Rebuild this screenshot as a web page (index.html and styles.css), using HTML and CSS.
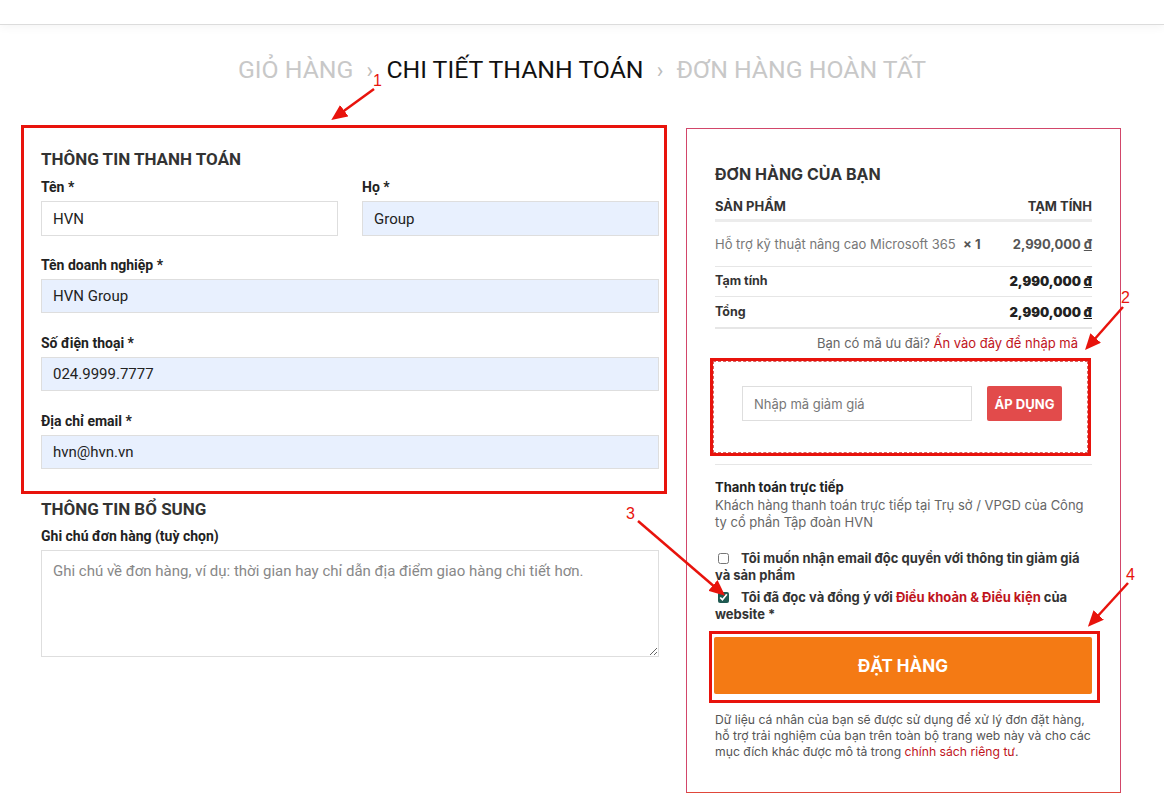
FILE: index.html
```html
<!DOCTYPE html>
<html lang="vi">
<head>
  <meta charset="UTF-8">
  <meta name="viewport" content="width=device-width, initial-scale=1.0">
  <title>Chi tiết thanh toán</title>
  <link rel="stylesheet" href="styles.css">
</head>
<body>
  <div class="topbar"></div>

  <div class="steps">
    <span class="step">GIỎ HÀNG</span>
    <span class="sep">›</span>
    <span class="step current">CHI TIẾT THANH TOÁN</span>
    <span class="sep">›</span>
    <span class="step">ĐƠN HÀNG HOÀN TẤT</span>
  </div>

  <div class="checkout">
    <div class="col-left">
      <div class="mark billing">
        <h3>THÔNG TIN THANH TOÁN</h3>
        <div class="row-2">
          <div class="field">
            <label>Tên *</label>
            <input type="text" class="plain" value="HVN">
          </div>
          <div class="field">
            <label>Họ *</label>
            <input type="text" value="Group">
          </div>
        </div>
        <div class="field">
          <label>Tên doanh nghiệp *</label>
          <input type="text" value="HVN Group">
        </div>
        <div class="field">
          <label>Số điện thoại *</label>
          <input type="text" value="024.9999.7777">
        </div>
        <div class="field last">
          <label>Địa chỉ email *</label>
          <input type="text" value="hvn@hvn.vn">
        </div>
      </div>

      <div class="extra">
        <h3>THÔNG TIN BỔ SUNG</h3>
        <label>Ghi chú đơn hàng (tuỳ chọn)</label>
        <textarea placeholder="Ghi chú về đơn hàng, ví dụ: thời gian hay chỉ dẫn địa điểm giao hàng chi tiết hơn."></textarea>
      </div>
    </div>

    <div class="col-right">
      <h3>ĐƠN HÀNG CỦA BẠN</h3>
      <table class="order">
        <thead>
          <tr><th>SẢN PHẨM</th><th class="num">TẠM TÍNH</th></tr>
        </thead>
        <tbody>
          <tr class="item">
            <td>Hỗ trợ kỹ thuật nâng cao Microsoft 365&nbsp; <b>× 1</b></td>
            <td class="num"><b>2,990,000 <u>đ</u></b></td>
          </tr>
          <tr class="sub">
            <th>Tạm tính</th>
            <td class="num"><b>2,990,000 <u>đ</u></b></td>
          </tr>
          <tr class="total">
            <th>Tổng</th>
            <td class="num"><b>2,990,000 <u>đ</u></b></td>
          </tr>
        </tbody>
      </table>

      <p class="coupon-ask">Bạn có mã ưu đãi? <a href="#">Ấn vào đây để nhập mã</a></p>

      <div class="mark coupon-mark">
        <div class="coupon">
          <input type="text" class="plain" placeholder="Nhập mã giảm giá">
          <button class="apply">ÁP DỤNG</button>
        </div>
      </div>

      <div class="payment">
        <strong>Thanh toán trực tiếp</strong>
        <p>Khách hàng thanh toán trực tiếp tại Trụ sở / VPGD của Công ty cổ phần Tập đoàn HVN</p>
      </div>

      <label class="check"><input type="checkbox"> Tôi muốn nhận email độc quyền với thông tin giảm giá và sản phẩm</label>
      <label class="check"><input type="checkbox" checked> Tôi đã đọc và đồng ý với <a href="#">Điều khoản &amp; Điều kiện</a> của website *</label>

      <div class="mark order-mark">
        <button class="place">ĐẶT HÀNG</button>
      </div>

      <p class="privacy">Dữ liệu cá nhân của bạn sẽ được sử dụng để xử lý đơn đặt hàng, hỗ trợ trải nghiệm của bạn trên toàn bộ trang web này và cho các mục đích khác được mô tả trong <a href="#">chính sách riêng tư</a>.</p>
    </div>
  </div>

  <!-- annotation arrows drawn over the screenshot -->
  <svg class="notes" width="1164" height="811" viewBox="0 0 1164 811">
    <defs>
      <marker id="head" markerWidth="16" markerHeight="14" refX="4" refY="7" orient="auto" markerUnits="userSpaceOnUse">
        <path d="M0 0 L16 7 L0 14 Z" fill="#e8130c"/>
      </marker>
    </defs>
    <g stroke="#e8130c" stroke-width="2.5" marker-end="url(#head)">
      <line x1="374" y1="89" x2="341" y2="113"/>
      <line x1="1123" y1="307" x2="1093" y2="341"/>
      <line x1="638" y1="521" x2="716" y2="588"/>
      <line x1="1128" y1="583" x2="1096" y2="618"/>
    </g>
    <g class="num-note">
      <text x="373" y="86">1</text>
      <text x="1121" y="303">2</text>
      <text x="626" y="519">3</text>
      <text x="1126" y="580">4</text>
    </g>
  </svg>
</body>
</html>
```

FILE: styles.css
```css
body {
  margin: 0;
  padding: 0;
  background-color: #fff;
  color: #333;
  font-family: Roboto, "Liberation Sans", Arial, sans-serif;
  position: relative;
  width: 1164px;
  height: 811px;
  overflow: hidden;
}
.topbar {
  height: 24px;
  border-bottom: 1px solid #dcdcdc;
  box-shadow: 0 3px 8px rgba(0, 0, 0, 0.04);
}
.steps {
  text-align: center;
  padding-top: 30px;
  font-size: 24.8px;
  line-height: 30px;
  color: #c8c8c8;
}
.steps .current {
  color: #111;
}
.steps .sep {
  font-size: 22px;
  color: #bbb;
  margin: 0 7px;
}
.checkout {
  display: flex;
  align-items: flex-start;
  gap: 19px;
  padding-left: 21px;
  margin-top: 39px;
}
.col-left {
  width: 646px;
}
.mark {
  border: 3px solid #e8130c;
}
.billing {
  padding: 21px 5px 22px 17px;
}
h3 {
  margin: 0;
  font-size: 17px;
  line-height: 20px;
  font-weight: 700;
  color: #333;
}
.billing h3 {
  margin-bottom: 9px;
}
label {
  display: block;
  font-size: 14px;
  line-height: 18px;
  font-weight: 700;
  color: #222;
  margin-bottom: 5px;
}
.row-2 {
  display: flex;
  gap: 24px;
}
.row-2 .field {
  flex: 1;
  margin-bottom: 20px;
}
.field {
  margin-bottom: 21px;
}
.field.last {
  margin-bottom: 0;
}
input[type="text"], textarea {
  display: block;
  box-sizing: border-box;
  width: 100%;
  height: 34px;
  margin: 0;
  padding: 0 11px;
  border: 1px solid #dedede;
  background-color: #e8f0fe;
  font-family: Roboto, "Liberation Sans", Arial, sans-serif;
  font-size: 15px;
  color: #222;
  outline: none;
}
input.plain {
  background-color: #fff;
}
.row-2 input {
  height: 35px;
}
.extra {
  padding: 5px 8px 0 20px;
}
.extra h3 {
  margin-bottom: 8px;
}
textarea {
  height: 107px;
  padding: 10px 11px;
  background-color: #fff;
  resize: vertical;
  line-height: 20px;
}
textarea::placeholder {
  color: #888;
}

/* order summary */
.col-right {
  width: 435px;
  box-sizing: border-box;
  margin-top: 3px;
  padding: 35px 28px 32px 28px;
  border: 1px solid #d2466a;
  border-bottom-color: #e0483a;
  font-family: Inter, "Noto Sans", sans-serif;
}
.col-right h3 {
  font-family: Inter, "Noto Sans", sans-serif;
  font-size: 16px;
  margin-bottom: 13px;
}
.order {
  width: 100%;
  border-collapse: collapse;
  font-size: 13px;
  line-height: 18px;
}
.order th, .order td {
  padding: 5px 0 6px;
  text-align: left;
  color: #333;
  border-bottom: 1px solid #e6e6e6;
  font-weight: 700;
}
.order thead th {
  padding: 0 0 4px 0;
  border-bottom: 3px solid #ececec;
}
.order .num {
  text-align: right;
  white-space: nowrap;
}
.order .item td {
  padding: 13px 0;
  color: #777;
  font-weight: 400;
}
.order .item td b {
  color: #555;
}
.order td b {
  color: #222;
}
.order .sub th, .order .total th {
  font-size: 12.5px;
}
.order .total th, .order .total td {
  padding: 6px 0 6px;
  border-bottom-width: 2px;
}
.coupon-ask {
  margin: 5px 14px 0 0;
  text-align: right;
  font-size: 13px;
  line-height: 18px;
  color: #666;
}
a {
  color: #c0141c;
  text-decoration: none;
}
.coupon-mark {
  margin: 6px 1px 0 -5px;
}
.coupon {
  display: flex;
  gap: 15px;
  padding: 24px 25px 31px 28px;
  border: 1px dashed #d86060;
}
.coupon input {
  width: 230px;
  flex: none;
  height: 35px;
  font-family: Inter, "Noto Sans", sans-serif;
  font-size: 13px;
}
.coupon input::placeholder {
  color: #777;
}
.apply {
  width: 78px;
  height: 35px;
  border: none;
  border-radius: 2px;
  background-color: #e24b4b;
  color: #fff;
  font-family: Inter, "Noto Sans", sans-serif;
  font-size: 13px;
  font-weight: 700;
}
.payment {
  margin-top: 8px;
  padding-top: 14px;
  border-top: 1px solid #e6e6e6;
  font-size: 13px;
  line-height: 17px;
}
.payment strong {
  color: #222;
}
.payment p {
  margin: 1px 0 0;
  color: #666;
}
.check {
  margin: 0;
  font-family: Inter, "Noto Sans", sans-serif;
  font-size: 13px;
  line-height: 17px;
  color: #333;
}
.payment + .check {
  margin-top: 19px;
}
.check + .check {
  margin-top: 5px;
}
.check input {
  width: 11px;
  height: 11px;
  margin: 0 9px 0 3px;
  vertical-align: -1px;
  accent-color: #1f5a52;
}
.order-mark {
  margin: 8px -8px 0 -6px;
  padding: 3px 5px 6px 2px;
}
.place {
  display: block;
  width: 100%;
  height: 57px;
  border: none;
  border-radius: 2px;
  background-color: #f47a14;
  color: #fff;
  font-family: Inter, "Noto Sans", sans-serif;
  font-size: 17px;
  font-weight: 700;
}
.privacy {
  margin: 9px 0 0;
  font-size: 12.2px;
  line-height: 16px;
  color: #555;
}
.notes {
  position: absolute;
  top: 0;
  left: 0;
  pointer-events: none;
}
.num-note text {
  fill: #e8130c;
  font-family: "Liberation Sans Narrow", "Liberation Sans", sans-serif;
  font-size: 16px;
}
```
